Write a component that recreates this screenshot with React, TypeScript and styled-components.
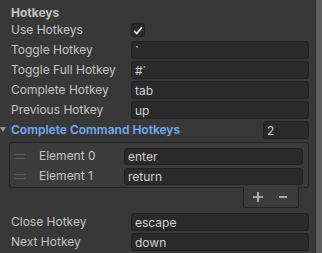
import React from "react";
import styled, { createGlobalStyle } from "styled-components";

const Global = createGlobalStyle`
  html, body { margin: 0; padding: 0; background: #383838; }
  body { font-family: Inter, "Noto Sans", sans-serif; font-size: 12px; color: #c4c4c4; }
`;

const Page = styled.div`
  display: flex;
  width: 322px;
  height: 253px;
  overflow: hidden;
  background: #383838;
`;

const Main = styled.div`
  flex: 1;
  display: flex;
  flex-direction: column;
  padding: 3px 6px 0 0;
`;

const Scrollbar = styled.div`
  width: 6px;
  border-left: 1px solid #303030;
  background: #5e5e5e;
`;

const Header = styled.div`
  height: 17px;
  display: flex;
  align-items: center;
  padding-left: 11px;
  padding-top: 1px;
  margin-bottom: -1px;
  font-weight: 700;
  color: #c4c4c4;
`;

const Row = styled.div`
  height: 20px;
  display: grid;
  grid-template-columns: 120px 1fr;
  align-items: center;
  padding-left: 11px;
`;

const Label = styled.span`
  white-space: nowrap;
  line-height: 20px;
`;

const Field = styled.div`
  height: 18px;
  box-sizing: border-box;
  background: #2a2a2a;
  border: 1px solid #212121;
  border-radius: 3px;
  display: flex;
  align-items: center;
  padding-left: 3px;
  color: #d2d2d2;
  white-space: pre;
`;

const Check = styled.div`
  width: 14px;
  height: 14px;
  box-sizing: border-box;
  background: #2a2a2a;
  border: 1px solid #212121;
  border-radius: 3px;
  display: flex;
  align-items: center;
  justify-content: center;
`;

const FoldRow = styled.div`
  height: 20px;
  display: flex;
  align-items: center;
  position: relative;
  padding-left: 11px;
`;

const Arrow = styled.svg`
  position: absolute;
  left: 0;
  top: 7px;
`;

const FoldLabel = styled.span`
  flex: 1;
  color: #79a8f0;
  font-weight: 600;
  line-height: 20px;
`;

const CountField = styled(Field)`
  width: 46px;
`;

const ListBox = styled.div`
  margin: 2px 0 0 9px;
  box-sizing: border-box;
  background: #3c3c3c;
  border: 1px solid #242424;
  border-radius: 3px;
  padding: 3px 5px 1px 0;
`;

const ElemRow = styled.div`
  height: 20px;
  display: grid;
  grid-template-columns: 29px 85px 1fr;
  align-items: center;
`;

const Handle = styled.div`
  justify-self: start;
  margin-left: 5px;
  width: 10px;
  height: 5px;
  border-top: 1px solid #626262;
  border-bottom: 1px solid #626262;
  box-sizing: border-box;
`;

const ElemField = styled(Field)`
  height: 17px;
`;

const FooterWrap = styled.div`
  display: flex;
  justify-content: flex-end;
  padding-right: 10px;
  margin-top: -1px;
`;

const Footer = styled.div`
  width: 56px;
  height: 21px;
  box-sizing: border-box;
  background: #3c3c3c;
  border: 1px solid #242424;
  border-top: none;
  border-radius: 0 0 3px 3px;
  display: flex;
  align-items: center;
  gap: 16px;
  padding-left: 9px;
`;

const Spacer = styled.div`
  height: 4px;
`;

const Icon = styled.svg`
  display: block;
`;

const rows1: [string, string][] = [
  ["Toggle Hotkey", "`"],
  ["Toggle Full Hotkey", "#`"],
  ["Complete Hotkey", "tab"],
  ["Previous Hotkey", "up"],
];

const rows2: [string, string][] = [
  ["Close Hotkey", "escape"],
  ["Next Hotkey", "down"],
];

export default function App() {
  return (
    <>
      <Global />
      <Page>
        <Main>
          <Header>Hotkeys</Header>
          <Row>
            <Label>Use Hotkeys</Label>
            <Check>
              <Icon width="10" height="9" viewBox="0 0 10 9">
                <path d="M1 4.8 L3.7 7.4 L9 1.3" fill="none" stroke="#e6e6e6" strokeWidth="1.7" />
              </Icon>
            </Check>
          </Row>
          {rows1.map(([l, v]) => (
            <Row key={l}>
              <Label>{l}</Label>
              <Field>{v}</Field>
            </Row>
          ))}
          <FoldRow>
            <Arrow width="6" height="6" viewBox="0 0 6 6">
              <path d="M0 0 L6 0 L3 5 Z" fill="#9a9a9a" />
            </Arrow>
            <FoldLabel>Complete Command Hotkeys</FoldLabel>
            <CountField>2</CountField>
          </FoldRow>
          <ListBox>
            {["enter", "return"].map((v, i) => (
              <ElemRow key={v}>
                <Handle />
                <Label>Element {i}</Label>
                <ElemField>{v}</ElemField>
              </ElemRow>
            ))}
          </ListBox>
          <FooterWrap>
            <Footer>
              <Icon width="10" height="10" viewBox="0 0 10 10">
                <path d="M5 0 V10 M0 5 H10" stroke="#c4c4c4" strokeWidth="1.6" />
              </Icon>
              <Icon width="8" height="10" viewBox="0 0 8 10">
                <path d="M0 5 H8" stroke="#c4c4c4" strokeWidth="1.6" />
              </Icon>
            </Footer>
          </FooterWrap>
          <Spacer />
          {rows2.map(([l, v]) => (
            <Row key={l}>
              <Label>{l}</Label>
              <Field>{v}</Field>
            </Row>
          ))}
        </Main>
        <Scrollbar />
      </Page>
    </>
  );
}
